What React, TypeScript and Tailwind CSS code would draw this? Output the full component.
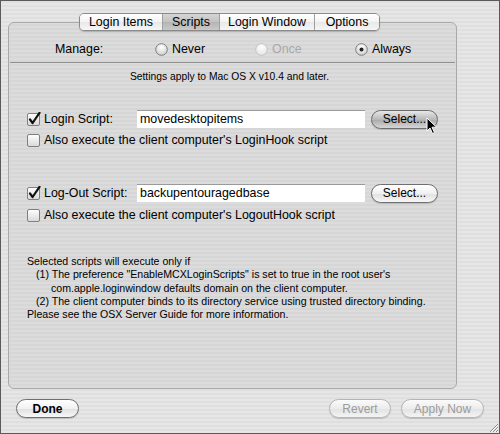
import React from 'react';

const stripes =
  'bg-[repeating-linear-gradient(0deg,#e6e6e6_0px,#e6e6e6_2px,#dfdfdf_2px,#dfdfdf_4px)]';

function Radio({ state }: { state: 'off' | 'on' | 'disabled' }) {
  return (
    <svg width="13" height="13" viewBox="0 0 13 13" className="shrink-0">
      <defs>
        <radialGradient id={`rg-${state}`} cx="50%" cy="30%" r="70%">
          <stop offset="0" stopColor="#ffffff" />
          <stop offset="1" stopColor={state === 'disabled' ? '#e4e4e4' : '#cfcfcf'} />
        </radialGradient>
      </defs>
      <circle
        cx="6.5"
        cy="6.5"
        r="5.8"
        fill={`url(#rg-${state})`}
        stroke={state === 'disabled' ? '#c4c4c4' : '#7d7d7d'}
        strokeWidth="1"
      />
      {state === 'on' && <circle cx="6.5" cy="6.5" r="2" fill="#222" />}
    </svg>
  );
}

function Check({ checked }: { checked: boolean }) {
  return (
    <svg width="14" height="14" viewBox="0 0 14 14" className="shrink-0">
      <defs>
        <linearGradient id="cbg" x1="0" y1="0" x2="0" y2="1">
          <stop offset="0" stopColor="#ffffff" />
          <stop offset="1" stopColor="#d8d8d8" />
        </linearGradient>
      </defs>
      <rect x="0.5" y="1.5" width="12" height="12" rx="1.5" fill="url(#cbg)" stroke="#808080" />
      {checked && (
        <path d="M3 7.5 L5.6 11 L12.5 0.8" fill="none" stroke="#111" strokeWidth="2.2" strokeLinecap="round" strokeLinejoin="round" />
      )}
    </svg>
  );
}

function Pill({
  label,
  width,
  bold,
  disabled,
  pressed,
}: {
  label: string;
  width: string;
  bold?: boolean;
  disabled?: boolean;
  pressed?: boolean;
}) {
  const tone = pressed
    ? 'bg-[linear-gradient(#e8e8e8,#b8b8b8_50%,#a9a9a9_51%,#d6d6d6)] border-[#6d6d6d]'
    : disabled
      ? 'bg-[linear-gradient(#fbfbfb,#ececec_50%,#e2e2e2_51%,#f4f4f4)] border-[#b5b5b5]'
      : 'bg-[linear-gradient(#ffffff,#f1f1f1_50%,#e0e0e0_51%,#f7f7f7)] border-[#6f6f6f]';
  return (
    <div
      className={`${width} h-[19px] rounded-full border flex items-center justify-center text-[12px] shadow-[0_1px_1px_rgba(0,0,0,0.15)] ${tone} ${
        disabled ? 'text-[#9c9c9c]' : 'text-black'
      } ${bold ? 'font-bold' : ''}`}
    >
      {label}
    </div>
  );
}

export default function App() {
  const tabs = [
    { label: 'Login Items', w: 'w-[83px]', first: true },
    { label: 'Scripts', w: 'w-[57px]', active: true },
    { label: 'Login Window', w: 'w-[95px]' },
    { label: 'Options', w: 'w-[64px]', last: true },
  ];

  return (
    <div
      className={`relative w-[500px] h-[434px] border border-[#5a5a5a] overflow-hidden ${stripes} font-['Liberation_Sans',Arial,sans-serif] text-black`}
    >
      <div className="flex flex-col pt-[12px]">
        {/* tabs */}
        <div className="relative z-10 flex justify-center pl-[2px] pr-[43px]">
          <div className="flex h-[18px] rounded-[5px] border border-[#8a8a8a] overflow-hidden shadow-[0_1px_1px_rgba(0,0,0,0.2)]">
            {tabs.map((t) => (
              <div
                key={t.label}
                className={`${t.w} flex items-center justify-center text-[12.4px] ${
                  t.last ? '' : 'border-r border-[#a0a0a0]'
                } ${
                  t.active
                    ? 'bg-[linear-gradient(#d6d6d6,#c2c2c2_50%,#b4b4b4_51%,#c9c9c9)]'
                    : 'bg-[linear-gradient(#ffffff,#f3f3f3_50%,#e8e8e8_51%,#f6f6f6)]'
                }`}
              >
                {t.label}
              </div>
            ))}
          </div>
        </div>

        {/* group box */}
        <div className="-mt-[9px] mx-[7px] w-[449px] h-[367px] rounded-[6px] border border-[#a9a9a9] bg-[repeating-linear-gradient(0deg,#dcdcdc_0px,#dcdcdc_2px,#d6d6d6_2px,#d6d6d6_4px)] flex flex-col">
          <div className="mt-[17px] h-[18px] flex items-center text-[12.4px]">
            <span className="ml-[46px] w-[100px]">Manage:</span>
            <div className="flex items-center gap-[4px] w-[100px]">
              <Radio state="off" />
              <span>Never</span>
            </div>
            <div className="flex items-center gap-[4px] w-[100px] text-[#a8a8a8]">
              <Radio state="disabled" />
              <span>Once</span>
            </div>
            <div className="flex items-center gap-[4px]">
              <Radio state="on" />
              <span>Always</span>
            </div>
          </div>

          <div className="mt-[4px] mx-[1px] h-px bg-[#8f8f8f]" />

          <div className="mt-[7px] h-[14px] leading-[14px] text-center text-[10.3px] pr-[6px]">
            Settings apply to Mac OS X v10.4 and later.
          </div>

          {/* login script */}
          <div className="mt-[26px] h-[18px] flex items-center text-[12.4px]">
            <div className="ml-[18px]">
              <Check checked />
            </div>
            <span className="ml-[3px] w-[93px]">Login Script:</span>
            <div className="w-[228px] h-[18px] bg-white border-t border-[#9a9a9a] pl-[3px] flex items-center">
              movedesktopitems
            </div>
            <div className="ml-[6px]">
              <Pill label="Select..." width="w-[67px]" pressed />
            </div>
          </div>
          <div className="mt-[5px] h-[14px] flex items-center text-[12.4px]">
            <div className="ml-[18px]">
              <Check checked={false} />
            </div>
            <span className="ml-[3px]">Also execute the client computer's LoginHook script</span>
          </div>

          {/* logout script */}
          <div className="mt-[37px] h-[18px] flex items-center text-[12.4px]">
            <div className="ml-[18px]">
              <Check checked />
            </div>
            <span className="ml-[3px] w-[93px]">Log-Out Script:</span>
            <div className="w-[228px] h-[18px] bg-white border-t border-[#9a9a9a] pl-[3px] flex items-center">
              backupentouragedbase
            </div>
            <div className="ml-[6px]">
              <Pill label="Select..." width="w-[67px]" />
            </div>
          </div>
          <div className="mt-[6px] h-[14px] flex items-center text-[12.4px]">
            <div className="ml-[18px]">
              <Check checked={false} />
            </div>
            <span className="ml-[3px]">Also execute the client computer's LogoutHook script</span>
          </div>

          {/* notes */}
          <div className="mt-[33px] ml-[18px] text-[10.6px] leading-[13.3px]">
            <div>Selected scripts will execute only if</div>
            <div className="pl-[9px]">
              (1) The preference "EnableMCXLoginScripts" is set to true in the root user's
            </div>
            <div className="pl-[24px]">com.apple.loginwindow defaults domain on the client computer.</div>
            <div className="pl-[9px]">
              (2) The client computer binds to its directory service using trusted directory binding.
            </div>
            <div>Please see the OSX Server Guide for more information.</div>
          </div>
        </div>

        {/* footer */}
        <div className="mt-[10px] flex items-center px-[15px]">
          <Pill label="Done" width="w-[63px]" bold />
          <div className="ml-auto flex gap-[10px]">
            <Pill label="Revert" width="w-[62px]" disabled />
            <Pill label="Apply Now" width="w-[83px]" disabled />
          </div>
        </div>
      </div>

      {/* mouse pointer */}
      <svg className="absolute left-[425px] top-[116px]" width="12" height="18" viewBox="0 0 12 18">
        <path d="M1 1 L1 14 L4 11 L6.5 16.5 L8.5 15.6 L6 10.2 L10.5 10.2 Z" fill="#000" stroke="#fff" strokeWidth="1" />
      </svg>

      {/* resize grip */}
      <svg className="absolute right-0 bottom-0" width="11" height="11" viewBox="0 0 11 11">
        <path d="M10 2 L2 10 M10 5 L5 10 M10 8 L8 10" stroke="#8a8a8a" strokeWidth="1" />
        <path d="M10 3 L3 10 M10 6 L6 10 M10 9 L9 10" stroke="#fafafa" strokeWidth="1" />
      </svg>
    </div>
  );
}
